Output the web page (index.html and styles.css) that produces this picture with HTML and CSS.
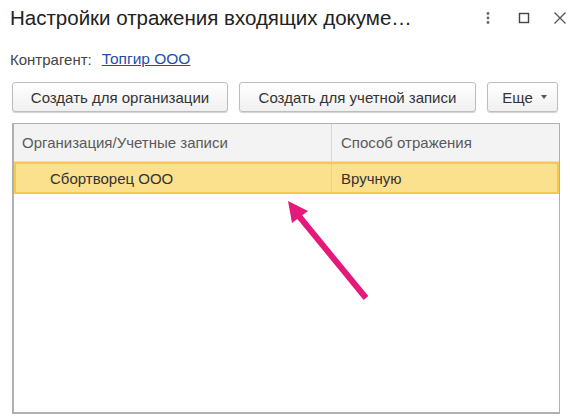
FILE: index.html
```html
<!DOCTYPE html>
<html lang="ru">
<head>
<meta charset="utf-8">
<link rel="stylesheet" href="styles.css">
</head>
<body>
<div class="window">
  <div class="titlebar">
    <div class="title">Настройки отражения входящих докуме…</div>
    <div class="controls">
      <svg class="ctl" width="14" height="14" viewBox="0 0 14 14"><circle cx="7" cy="2.5" r="1.4" fill="#666"/><circle cx="7" cy="7" r="1.4" fill="#666"/><circle cx="7" cy="11.5" r="1.4" fill="#666"/></svg>
      <svg class="ctl" width="14" height="14" viewBox="0 0 14 14"><rect x="2.5" y="2.5" width="9" height="9" fill="none" stroke="#444" stroke-width="1.4"/></svg>
      <svg class="ctl" width="14" height="14" viewBox="0 0 14 14"><path d="M1.5 1.5 L12.5 12.5 M12.5 1.5 L1.5 12.5" stroke="#555" stroke-width="1.3"/></svg>
    </div>
  </div>
  <div class="field">
    <span class="label">Контрагент:</span>
    <a class="link" href="#">Топгир ООО</a>
  </div>
  <div class="toolbar">
    <button class="btn b1">Создать для организации</button>
    <button class="btn b2">Создать для учетной записи</button>
    <button class="btn b3">Еще <span class="caret"></span></button>
  </div>
  <div class="table">
    <div class="thead">
      <div class="c1">Организация/Учетные записи</div>
      <div class="c2">Способ отражения</div>
    </div>
    <div class="row sel">
      <div class="c1 indent">Сбортворец ООО</div>
      <div class="c2">Вручную</div>
    </div>
  </div>
  <svg class="arrow" width="110" height="120" viewBox="0 0 110 120">
    <line x1="96" y1="108" x2="28" y2="25" stroke="#e4197a" stroke-width="6"/>
    <polygon points="18,11 38,21 22,33" fill="#e4197a"/>
  </svg>
</div>
</body>
</html>
```

FILE: styles.css
```css
* { box-sizing: border-box; }
html, body { margin: 0; padding: 0; background: #fff; }
body {
  font-family: "Liberation Sans", Arial, sans-serif;
  color: #333;
  width: 570px;
  height: 419px;
  overflow: hidden;
}
.window { position: relative; padding: 0 10px 0 12px; }
.titlebar {
  display: flex;
  align-items: center;
  height: 36px;
  margin-left: -2px;
}
.title {
  font-size: 20.5px;
  color: #222;
  flex: 1;
  white-space: nowrap;
}
.controls { display: flex; gap: 22px; align-items: center; margin-right: -7px; }
.ctl { display: block; }
.field {
  height: 20px;
  margin-top: 13px;
  margin-left: -2px;
  font-size: 15px;
  display: flex;
  align-items: center;
  gap: 10px;
}
.label { color: #444; }
.link { color: #1d4ea8; text-decoration: underline; font-size: 15.5px; }
.toolbar {
  display: flex;
  gap: 11px;
  margin-top: 13px;
  height: 30px;
}
.btn {
  font-family: "Liberation Sans", Arial, sans-serif;
  font-size: 15px;
  color: #333;
  height: 30px;
  border: 1px solid #bdbdbd;
  border-radius: 3px;
  background: linear-gradient(#ffffff, #f0f0f0);
  box-shadow: 0 1px 1px rgba(0,0,0,0.18);
  padding: 0;
}
.b1 { width: 216px; }
.b2 { width: 237px; }
.b3 { width: 71px; display: flex; align-items: center; justify-content: center; gap: 8px; padding-left: 4px; }
.caret {
  width: 0; height: 0;
  border-left: 3px solid transparent;
  border-right: 3px solid transparent;
  border-top: 4px solid #555;
}
.table {
  margin-top: 11px;
  width: 548px;
  height: 291px;
  border: 1px solid #b0b0b0;
  border-left: 2px solid #b0b0b0;
  border-bottom: 2px solid #b0b0b0;
  font-size: 15px;
}
.thead {
  display: flex;
  height: 38px;
  background: #f3f3f3;
  border-bottom: 1px solid #ddd;
  color: #5a5a5a;
}
.thead > div, .row > div { display: flex; align-items: center; }
.c1 { width: 317px; padding-left: 8px; }
.c2 { flex: 1; padding-left: 9px; border-left: 1px solid #d8d8d8; }
.row { display: flex; height: 32px; color: #333; }
.row.sel {
  background: #fbe08e;
  border: 2px solid #f2cb4c;
}
.row.sel .c1 { width: 315px; }
.row.sel .c2 { border-left: 1px solid #f0d27a; }
.indent { padding-left: 34px !important; }
.arrow { position: absolute; left: 270px; top: 190px; }
```
